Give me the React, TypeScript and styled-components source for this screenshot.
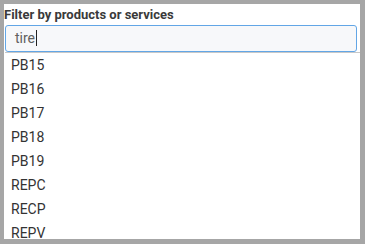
import styled, { createGlobalStyle } from "styled-components";

const OPTIONS = ["PB15", "PB16", "PB17", "PB18", "PB19", "REPC", "RECP", "REPV"];

const GlobalStyle = createGlobalStyle`
  html, body {
    margin: 0;
    padding: 0;
    background: #a6a6a6;
  }
`;

export default function App() {
  return (
    <>
      <GlobalStyle />
      <Panel>
        <Label>Filter by products or services</Label>
        <SearchBox role="textbox" aria-label="Filter by products or services">
          tire
          <Caret />
        </SearchBox>
        <OptionList>
          {OPTIONS.map((option) => (
            <Option key={option}>{option}</Option>
          ))}
        </OptionList>
      </Panel>
    </>
  );
}

const Panel = styled.div`
  display: flex;
  flex-direction: column;
  margin: 4px 5px 0 4px;
  height: 235px;
  background: #ffffff;
  overflow: hidden;
  font-family: Roboto, "Liberation Sans", sans-serif;

  & > * {
    flex-shrink: 0;
  }
`;

const Label = styled.label`
  padding-top: 3px;
  font-size: 13px;
  line-height: 15px;
  font-weight: 700;
  color: #3a3a3a;
`;

const SearchBox = styled.div`
  display: flex;
  align-items: center;
  box-sizing: border-box;
  margin: 3px 3px 0 1px;
  height: 27px;
  padding: 0 0 1px 9px;
  border: 1px solid #62a6e6;
  border-radius: 3px;
  background: #f7f8fa;
  font-size: 14px;
  color: #606060;
`;

const Caret = styled.span`
  display: inline-block;
  width: 1px;
  height: 16px;
  margin-left: 1px;
  background: #222;
`;

const OptionList = styled.ul`
  margin: 0 0 0 1px;
  padding: 0;
  list-style: none;
  border-top: 1px solid #c8c8c8;
`;

const Option = styled.li`
  height: 24px;
  line-height: 24px;
  padding-left: 6px;
  font-size: 14px;
  color: #333333;
`;
